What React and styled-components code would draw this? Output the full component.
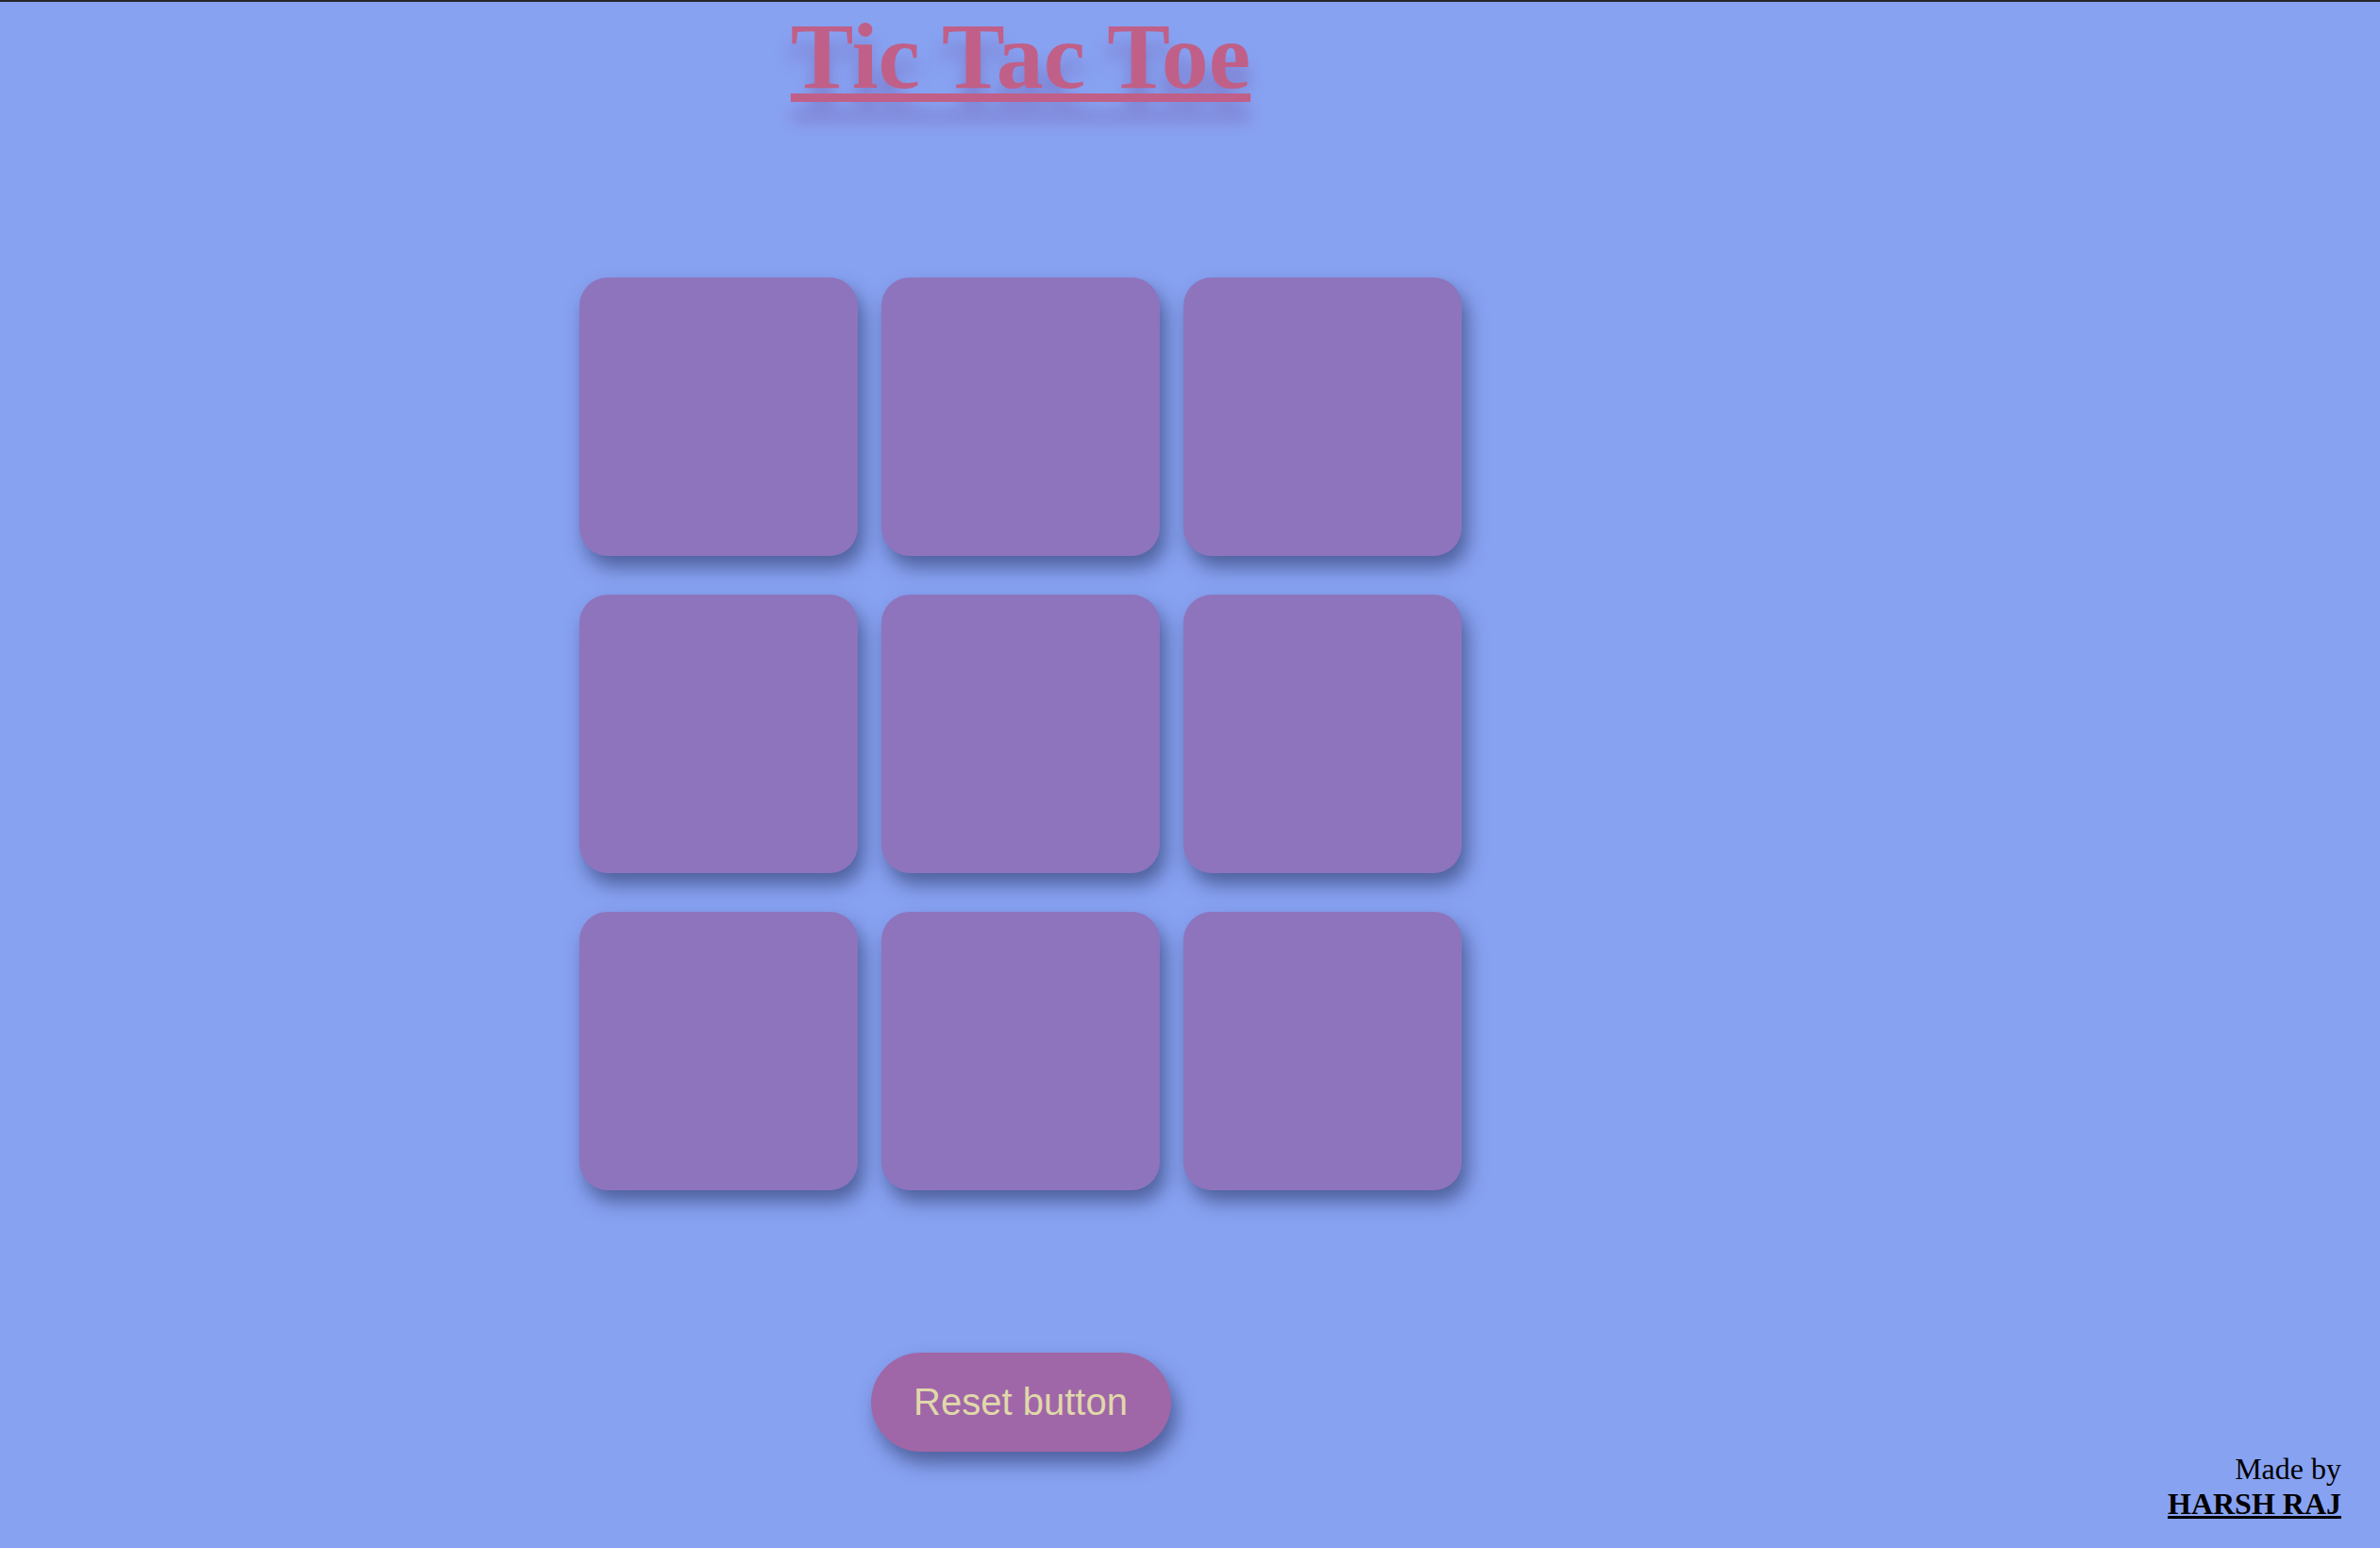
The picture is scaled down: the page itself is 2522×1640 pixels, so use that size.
import React, { useState } from "react";
import styled, { createGlobalStyle } from "styled-components";

const Global = createGlobalStyle`
  * { box-sizing: border-box; }
  html, body { margin: 0; padding: 0; }
  body {
    background: #88a2f2;
    border-top: 2px solid #262626;
    min-height: 100vh;
    font-family: "Liberation Serif", "Times New Roman", serif;
  }
`;

const Page = styled.div`
  display: grid;
  grid-template-columns: 2163px 1fr;
  min-height: calc(100vh - 2px);
`;

const Main = styled.main`
  display: flex;
  flex-direction: column;
  align-items: center;
  padding-top: 8px;
`;

const Title = styled.h1`
  margin: 0;
  font-family: "Liberation Serif", "Times New Roman", serif;
  font-weight: 700;
  font-size: 100px;
  line-height: 1;
  color: #c06088;
  text-decoration: underline;
  text-decoration-thickness: 9px;
  text-underline-offset: 6px;
  text-shadow: 0 20px 18px rgba(110, 60, 140, 0.4);
`;

const Board = styled.div`
  margin-top: 184px;
  display: grid;
  grid-template-columns: repeat(3, 295px);
  grid-auto-rows: 295px;
  column-gap: 25px;
  row-gap: 41px;
`;

const Cell = styled.button`
  border: none;
  padding: 0;
  background: #8e74bd;
  border-radius: 30px;
  box-shadow: 6px 12px 20px rgba(20, 30, 70, 0.5);
  cursor: pointer;
  font: 700 160px "Liberation Sans", Arial, sans-serif;
  color: #e0d8aa;
`;

const ResetButton = styled.button`
  margin-top: 172px;
  width: 318px;
  height: 105px;
  border: none;
  border-radius: 53px;
  background: #a067a8;
  color: #e0d8aa;
  font-family: "Liberation Sans", Arial, sans-serif;
  font-size: 40px;
  box-shadow: 6px 12px 20px rgba(20, 30, 70, 0.5);
  cursor: pointer;
`;

const Footer = styled.footer`
  align-self: end;
  padding: 0 41px 28px 0;
  text-align: right;
  font-family: "Liberation Serif", "Times New Roman", serif;
  font-size: 32px;
  color: #000;
`;

const Author = styled.b`
  text-decoration: underline;
`;

export default function App() {
  const [cells, setCells] = useState(Array(9).fill(""));
  const [turn, setTurn] = useState("X");

  const play = (i) => {
    if (cells[i]) return;
    const next = cells.slice();
    next[i] = turn;
    setCells(next);
    setTurn(turn === "X" ? "O" : "X");
  };

  return (
    <>
      <Global />
      <Page>
        <Main>
          <Title>Tic Tac Toe</Title>
          <Board>
            {cells.map((c, i) => (
              <Cell key={i} onClick={() => play(i)}>
                {c}
              </Cell>
            ))}
          </Board>
          <ResetButton onClick={() => setCells(Array(9).fill(""))}>
            Reset button
          </ResetButton>
        </Main>
        <Footer>
          Made by
          <br />
          <Author>HARSH RAJ</Author>
        </Footer>
      </Page>
    </>
  );
}
